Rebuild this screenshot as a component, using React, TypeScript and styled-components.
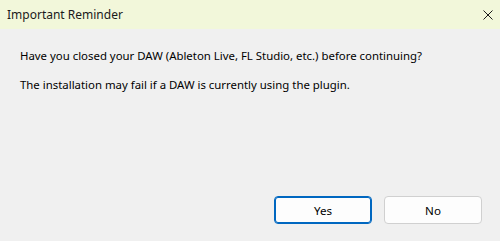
import React from "react";
import styled, { createGlobalStyle } from "styled-components";

const Global = createGlobalStyle`
  html, body { margin: 0; padding: 0; background: #f0f0f0; }
  * { box-sizing: border-box; }
`;

const Window = styled.div`
  width: 500px;
  height: 241px;
  display: flex;
  flex-direction: column;
  background: #f0f0f0;
  font-family: "Segoe UI", "Noto Sans", "Liberation Sans", sans-serif;
  font-size: 12px;
  color: #000;
`;

const TitleBar = styled.div`
  height: 29px;
  display: flex;
  align-items: center;
  justify-content: space-between;
  padding-left: 7px;
  background: #f2f7da;
`;

const Title = styled.span`
  font-size: 12px;
  color: #1a1a1a;
`;

const CloseButton = styled.div`
  width: 46px;
  height: 29px;
  display: flex;
  align-items: center;
  justify-content: center;
  margin-right: -11px;
`;

const Body = styled.div`
  flex: 1;
  display: flex;
  flex-direction: column;
  padding: 19px 20px 0 20px;
  gap: 13px;
`;

const Message = styled.p`
  margin: 0;
  font-size: 11.4px;
  line-height: 16px;
`;

const Footer = styled.div`
  display: flex;
  justify-content: flex-end;
  gap: 12px;
  padding: 0 18px 17px 0;
`;

const Button = styled.button<{ $primary?: boolean }>`
  width: 98px;
  height: 28px;
  border-radius: 4px;
  background: #fdfdfd;
  border: 1px solid ${(p) => (p.$primary ? "#0067c0" : "#d0d0d0")};
  box-shadow: ${(p) => (p.$primary ? "inset 0 0 0 1px #0067c0" : "none")};
  font-family: inherit;
  font-size: 11.6px;
  color: #000;
  padding: 0;
`;

export default function App() {
  return (
    <>
      <Global />
      <Window>
        <TitleBar>
          <Title>Important Reminder</Title>
          <CloseButton>
            <svg width="10" height="10" viewBox="0 0 10 10">
              <path d="M0.5 0.5 L9.5 9.5 M9.5 0.5 L0.5 9.5" stroke="#1a1a1a" strokeWidth="1" />
            </svg>
          </CloseButton>
        </TitleBar>
        <Body>
          <Message>Have you closed your DAW (Ableton Live, FL Studio, etc.) before continuing?</Message>
          <Message>The installation may fail if a DAW is currently using the plugin.</Message>
        </Body>
        <Footer>
          <Button $primary>Yes</Button>
          <Button>No</Button>
        </Footer>
      </Window>
    </>
  );
}
